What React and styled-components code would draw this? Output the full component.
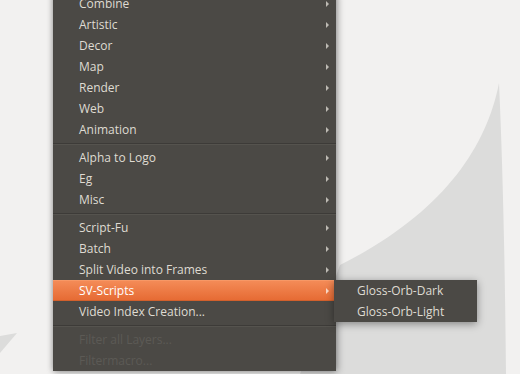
import React from 'react';
import styled, { createGlobalStyle } from 'styled-components';

const GlobalStyle = createGlobalStyle`
    html, body {
        margin: 0;
        padding: 0;
        background: #f2f1f0;
        overflow: hidden;
    }
`;

const StyledDesktop = styled.div`
    position: relative;
    width: 520px;
    height: 374px;
    overflow: hidden;
    background: #f2f1f0;
    font-family: "Open Sans", "DejaVu Sans", sans-serif;
    font-size: 12px;
`;

const StyledArtwork = styled.svg`
    position: absolute;
    inset: 0;
`;

// popup menus float over the wallpaper
const StyledMenu = styled.div`
    position: absolute;
    left: 53px;
    top: -7px;
    width: 283px;
    display: flex;
    flex-direction: column;
    background: #4b4945;
    box-shadow: 0 0 6px rgba(0, 0, 0, 0.35), 2px 1px 8px rgba(0, 0, 0, 0.2);
`;

const StyledSubmenu = styled(StyledMenu)`
    left: 334px;
    top: 280px;
    width: 143px;
    z-index: 2;
    box-shadow: 0 2px 8px rgba(0, 0, 0, 0.4);
`;

const StyledItem = styled.div`
    display: flex;
    align-items: center;
    justify-content: space-between;
    height: 21px;
    padding: 0 7px 0 ${props => props.$indent || 26}px;
    box-sizing: border-box;
    color: ${props => props.$disabled ? '#5c5a55' : '#dfdbd2'};
    white-space: nowrap;

    ${props => props.$active && `
        margin-right: 2px;
        padding-right: 5px;
        background: linear-gradient(#f48b57, #e66b34);
        border-top: 1px solid #f79866;
        border-bottom: 1px solid #d2602c;
        color: #ffffff;
    `}
`;

const StyledArrow = styled.span`
    width: 0;
    height: 0;
    border-top: 3px solid transparent;
    border-bottom: 3px solid transparent;
    border-left: 3px solid ${props => props.$active ? '#fbd9c6' : '#bdbab3'};
`;

const StyledSeparator = styled.div`
    height: 7px;
    display: flex;
    align-items: center;

    &::before {
        content: '';
        flex: 1;
        height: 1px;
        background: #3d3b38;
        box-shadow: 0 1px 0 #55534e;
    }
`;

const menu = [
    { label: 'Combine', sub: true },
    { label: 'Artistic', sub: true },
    { label: 'Decor', sub: true },
    { label: 'Map', sub: true },
    { label: 'Render', sub: true },
    { label: 'Web', sub: true },
    { label: 'Animation', sub: true },
    { sep: true },
    { label: 'Alpha to Logo', sub: true },
    { label: 'Eg', sub: true },
    { label: 'Misc', sub: true },
    { sep: true },
    { label: 'Script-Fu', sub: true },
    { label: 'Batch', sub: true },
    { label: 'Split Video into Frames', sub: true },
    { label: 'SV-Scripts', sub: true, active: true },
    { label: 'Video Index Creation...' },
    { sep: true },
    { label: 'Filter all Layers...', disabled: true },
    { label: 'Filtermacro...', disabled: true },
];

function App() {
    return (
        <>
            <GlobalStyle />
            <StyledDesktop>
                {/* wallpaper shapes */}
                <StyledArtwork width="520" height="374" viewBox="0 0 520 374">
                    <path
                        d="M499 83 C 486 150, 440 215, 340 265 L 300 374 L 506 374 C 505 270, 503 170, 499 83 Z"
                        fill="#dcdcdb"
                    />
                    <path d="M0 336 L17 333 L0 353 Z" fill="#dcdcdb" />
                </StyledArtwork>

                <StyledMenu>
                    {menu.map((item, i) =>
                        item.sep ? (
                            <StyledSeparator key={i} />
                        ) : (
                            <StyledItem key={i} $active={item.active} $disabled={item.disabled}>
                                <span>{item.label}</span>
                                {item.sub && <StyledArrow $active={item.active} />}
                            </StyledItem>
                        )
                    )}
                </StyledMenu>

                <StyledSubmenu>
                    <StyledItem $indent={23}>Gloss-Orb-Dark</StyledItem>
                    <StyledItem $indent={23}>Gloss-Orb-Light</StyledItem>
                </StyledSubmenu>
            </StyledDesktop>
        </>
    );
}

export default App;
